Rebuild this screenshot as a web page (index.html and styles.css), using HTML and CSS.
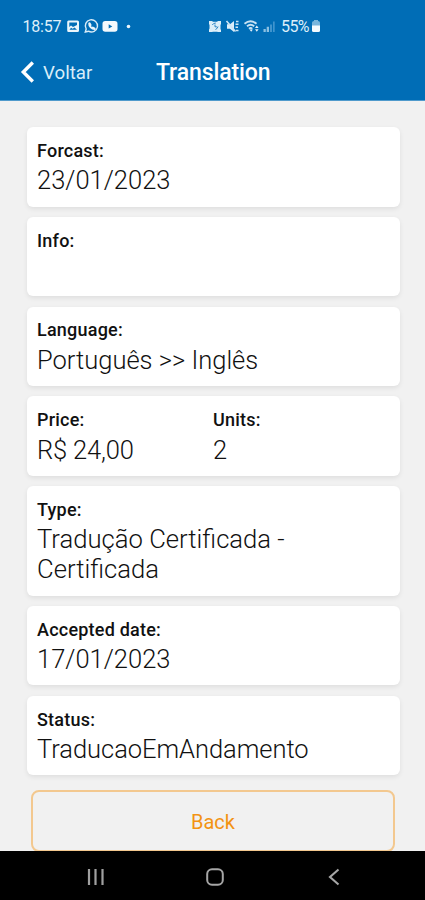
FILE: index.html
```html
<!DOCTYPE html>
<html lang="pt">
<head>
<meta charset="utf-8">
<title>Translation</title>
<link rel="stylesheet" href="styles.css">
</head>
<body>
<div class="screen">
  <header class="header">
    <div class="status">
      <span class="clock">18:57</span>
      <svg class="icons-left" width="66" height="16" viewBox="0 0 66 16" fill="none">
        <path fill="#eaf5fb" fill-rule="evenodd" d="M2.500 2.500h9q1.500 0 1.500 1.500v8.500q0 1.500-1.500 1.500h-9q-1.300 0-1.300-1.500v-8.500q0-1.500 1.300-1.500zM3.300 4.500v4.500l1.700-1.500 2 1.500 4-2v-2.500zM3.500 11.800h7.500l-2.500-2.300-1.800 1.300-1.700-1z"/>
        <path stroke="#d8ecf8" stroke-width="1.400" d="M19.300 14l.9-3a6.100 6.100 0 1 1 2.300 2.200z"/>
        <path stroke="#eaf5fb" stroke-width="2.100" stroke-linecap="round" d="M23.300 5.500c-.2 3 2.500 5.500 5.300 5.500M23.500 5.400l1 1.700M26.800 9.700l1.800 1"/>
        <rect x="36.500" y="3" width="15" height="10.800" rx="2.800" fill="#f3f9fd"/>
        <path fill="#006db6" d="M42.700 6.300l3.600 2.100-3.600 2.100z"/>
        <circle cx="62.500" cy="8.500" r="1.800" fill="#eaf5fb"/>
      </svg>
      <svg class="icons-right" width="68" height="16" viewBox="0 0 68 16" fill="none">
        <path fill="#dceef9" d="M1 3h3l1 .8h4l1-.8h3v3l-.5 1v4l.5 1v2h-3l-1-.3h-4l-1 .3h-3v-2.500l.5-1v-3.500l-.5-1z"/>
        <path stroke="#2983c3" stroke-width="1" d="M4.300 7q1-2 3.500-2M7 6.500v2.300h1.900M10 8.500q-.3 2-2.500 3"/>
        <path fill="#dceef9" d="M19 6.300h3l4-3.300v11l-4-3.300h-3z"/>
        <path stroke="#cde5f5" stroke-width="1.600" d="M18.500 3l9 10.500M28 3.500h2.500M27.500 6.300h3M27.500 9.200h2.500M28 12.500h2.500"/>
        <path stroke="#c8e2f3" stroke-width="1.900" d="M36.500 5.700q6-4.700 12 0M39 8.200q3.600-3 7.200 0M41 10.700q1.600-1.300 3.300 0"/>
        <path fill="#e3f1fa" d="M41.500 11.400l1.700 2.300 1.700-2.300zM47 10l1.800-2.500 1.800 2.500zM47 11.300h3.600l-1.800 2.500z"/>
        <path fill="#8bc0e2" d="M55.500 11h2.300v3h-2.300zM58.700 8.800h2.300v5.200h-2.300z"/>
        <path fill="#3f94ce" d="M62 6.500h2v7.500h-2zM65 3.500h1.700v10.500h-1.700z"/>
      </svg>
      <span class="percent">55%</span>
      <svg class="battery" width="10" height="14" viewBox="0 0 10 14">
        <path fill="#78b5dc" d="M3 1h4v1q2 .2 2 1.800v3.200h-8v-3.200q0-1.600 2-1.800z"/>
        <path fill="#f4fafe" d="M1 6.500h8v5q0 1.500-1.500 1.500h-5q-1.500 0-1.500-1.500z"/>
      </svg>
    </div>
    <div class="titlebar">
      <a class="voltar">
        <svg width="16" height="24" viewBox="0 0 16 24" fill="none"><path d="M12.800 2.500L3.300 12l9.500 9.500" stroke="#fff" stroke-width="3.400"/></svg>
        <span class="voltar-text">Voltar</span>
      </a>
      <h1 class="title">Translation</h1>
    </div>
  </header>
  <main class="content">
    <section class="card"><h2 class="label">Forcast:</h2><p class="value">23/01/2023</p></section>
    <section class="card"><h2 class="label">Info:</h2></section>
    <section class="card"><h2 class="label">Language:</h2><p class="value">Português &gt;&gt; Inglês</p></section>
    <section class="card columns">
      <div><h2 class="label">Price:</h2><p class="value price">R$ 24,00</p></div>
      <div><h2 class="label">Units:</h2><p class="value">2</p></div>
    </section>
    <section class="card tall"><h2 class="label">Type:</h2><p class="value type">Tradução Certificada -<br>Certificada</p></section>
    <section class="card"><h2 class="label">Accepted date:</h2><p class="value">17/01/2023</p></section>
    <section class="card"><h2 class="label">Status:</h2><p class="value status-value">TraducaoEmAndamento</p></section>
    <button class="back">Back</button>
  </main>
  <nav class="nav">
    <svg width="18" height="18" viewBox="0 0 18 18"><path d="M2 1v16M8.500 1v16M15.500 1v16" stroke="#a0a0a0" stroke-width="2.200"/></svg>
    <svg width="18" height="18" viewBox="0 0 18 18"><rect x="1.200" y="1.200" width="15.600" height="15.600" rx="4.800" fill="none" stroke="#a6a6a6" stroke-width="2"/></svg>
    <svg width="18" height="18" viewBox="0 0 18 18"><path d="M13.500 1.500L5 9l8.500 7.500" fill="none" stroke="#a6a6a6" stroke-width="2.100"/></svg>
  </nav>
</div>
</body>
</html>
```
FILE: styles.css
```css
* { box-sizing: border-box; }
body { margin: 0; font-family: Roboto, "Liberation Sans", sans-serif; }
h1, h2, p { margin: 0; }
svg { display: block; flex: none; }
.screen { width: 425px; height: 900px; display: flex; flex-direction: column; overflow: hidden; background: #f1f1f1; }
.header { flex: none; height: 101px; background: #006db6; color: #fff; border-bottom: 1px solid #4f9acc; }
.status { height: 42px; padding: 10px 0 0 22.500px; display: flex; align-items: center; font-size: 16px; color: #deeffa; }
.clock { width: 43px; letter-spacing: -0.2px; }
.icons-right { margin-left: 76.500px; }
.percent { margin-left: 5px; width: 29px; letter-spacing: -0.6px; }
.battery { margin-left: 1px; }
.titlebar { height: 60px; display: grid; grid-template-columns: 156px 1fr; align-items: center; }
.voltar { display: flex; align-items: center; gap: 7px; padding-left: 20px; }
.voltar-text { font-size: 18.700px; color: #d9edf9; padding-top: 1px; }
.title { font-size: 23px; font-weight: 500; letter-spacing: -0.1px; padding-top: 1px; }
.content { flex: 1; min-height: 0; overflow: hidden; padding: 26px 25px 0 26.500px; display: flex; flex-direction: column; gap: 10.300px; }
.card { flex: none; height: 79.500px; padding: 8.800px 10.500px 0; background: #fff; border-radius: 6px; box-shadow: 0 2px 5px rgba(0, 0, 0, .08); color: #111; }
.tall { height: 109.500px; }
.columns { display: grid; grid-template-columns: 176px 1fr; }
.label { font-size: 18px; font-weight: 500; line-height: 30px; letter-spacing: 0.22px; }
.value { font-size: 25.500px; font-weight: 300; line-height: 30px; margin-top: -0.500px; white-space: nowrap; }
.price { letter-spacing: -0.15px; }
.type { font-size: 25.650px; }
.status-value { letter-spacing: -0.04px; }
.back { flex: none; height: 62px; margin: 4px 5px 0 4.500px; padding: 3px 0 0; background: transparent; border: 2px solid #f3c88f; border-radius: 8px; font-family: inherit; font-size: 20px; color: #f39313; }
.nav { flex: none; height: 49px; background: #000; display: flex; align-items: center; justify-content: space-between; padding: 2px 82px 0 87px; }
```
